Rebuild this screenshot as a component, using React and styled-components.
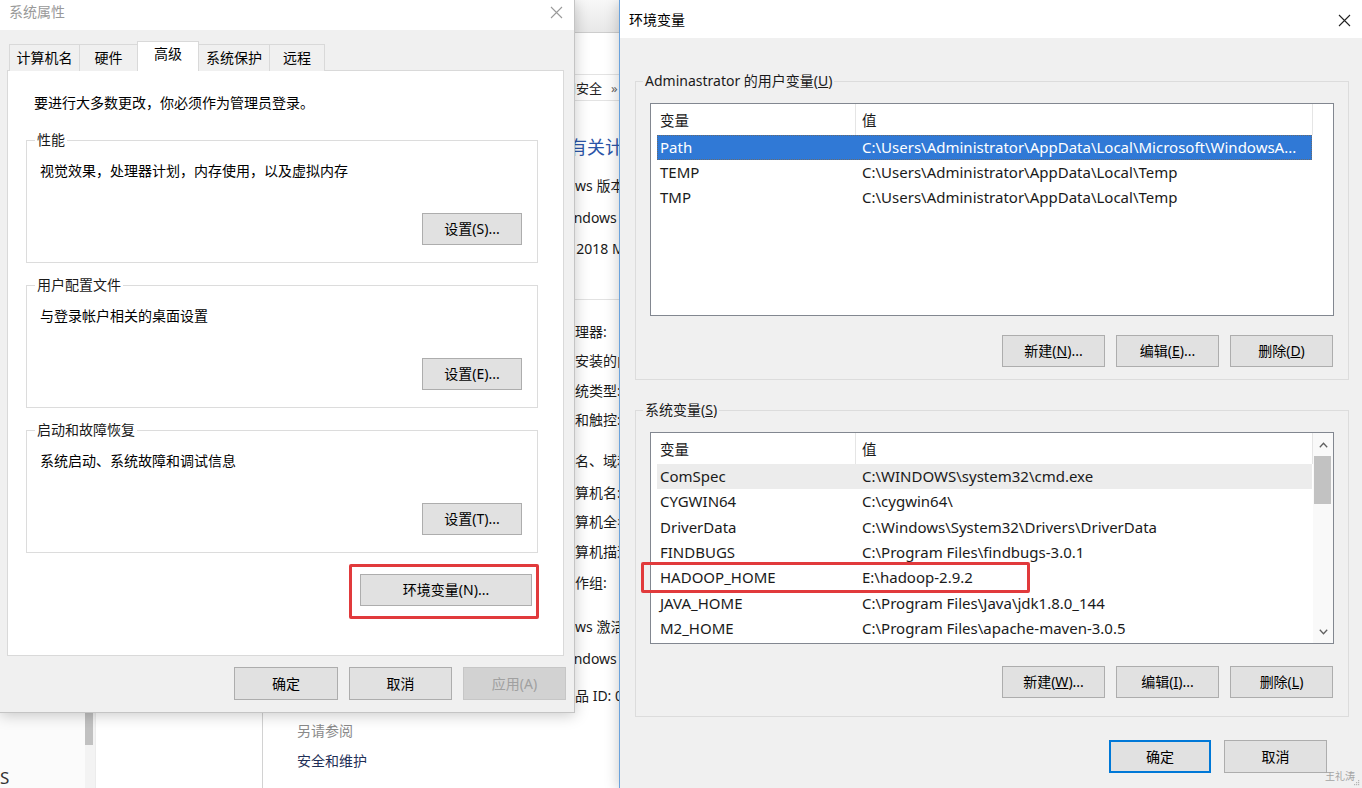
import styled, { createGlobalStyle } from "styled-components";

const GlobalStyle = createGlobalStyle`
  html, body {
    margin: 0;
    padding: 0;
    background: #fff;
  }
  body {
    font-family: "Noto Sans", "Noto Sans CJK SC", sans-serif;
    font-size: 14px;
    color: #000;
  }
  * {
    box-sizing: border-box;
  }
`;

const Desktop = styled.div`
  position: relative;
  width: 1362px;
  height: 788px;
  overflow: hidden;
  background: #fff;
`;

/* ---------- windows in the background ---------- */

const Explorer = styled.div`
  position: absolute;
  left: 0;
  top: 0;
  width: 262px;
  height: 788px;
  display: flex;
  background: #fff;
`;

const ExplorerList = styled.div`
  width: 85px;
  display: flex;
  flex-direction: column;
  justify-content: flex-end;
  padding-bottom: 0;
  background: #fbfbfb;
  font-size: 17px;
  line-height: 20px;
  color: #333;
  overflow: hidden;
`;

const ScrollTrack = styled.div`
  width: 10px;
  padding: 600px 2px 0 0;
  background: #f3f3f3;
`;

const TrackThumb = styled.div`
  height: 145px;
  background: #c1c1c1;
`;

const NavPane = styled.div`
  flex: 1;
  border-left: 1px solid #ececec;
`;

const ControlPanel = styled.div`
  position: absolute;
  left: 262px;
  top: 0;
  width: 720px;
  height: 788px;
  display: flex;
  flex-direction: column;
  background: #fff;
  border-left: 1px solid #d2d2d2;
`;

const CpToolbar = styled.div`
  height: 33px;
  background: linear-gradient(#f8f8f8, #e8e8e8);
  border-bottom: 1px solid #cdcdcd;
`;

const Breadcrumb = styled.div`
  margin-top: 41px;
  height: 27px;
  display: flex;
  align-items: center;
  gap: 9px;
  padding-left: 274px;
  border-top: 1px solid #e3e3e3;
  border-bottom: 1px solid #e3e3e3;
  font-size: 13px;
  color: #222;
  white-space: nowrap;
`;

const Crumb = styled.span`
  color: ${(p) => (p.$sep ? "#666" : "#222")};
`;

const CpBody = styled.div`
  flex: 1;
  display: flex;
`;

const CpSide = styled.div`
  width: 257px;
  display: flex;
  flex-direction: column;
  justify-content: flex-end;
  padding: 0 0 17px 34px;
  line-height: 20px;
`;

const SeeAlso = styled.div`
  margin-bottom: 10px;
  color: #8a8a8a;
`;

const SideLink = styled.div`
  color: #1f2f57;
`;

const CpMain = styled.div`
  flex: 1;
  display: flex;
  flex-direction: column;
  white-space: nowrap;
`;

const indents = { title: 13, head: 13, item: 41, sub: 37 };

const InfoLine = styled.div`
  margin-top: ${(p) => p.$mt}px;
  padding-left: ${(p) => indents[p.$kind]}px;
  font-size: ${(p) => (p.$kind === "title" ? 18 : 14)}px;
  line-height: ${(p) => (p.$kind === "title" ? 26 : 20)}px;
  color: ${(p) => (p.$kind === "title" ? "#2b55a8" : "#1a1a1a")};
`;

const InfoRule = styled.div`
  margin-top: ${(p) => p.$mt}px;
  height: 1px;
  background: #e2e2e2;
`;

const infoLines = [
  { kind: "title", mt: 33, text: "查看有关计算机的基本信息" },
  { kind: "head", mt: 16, text: "Windows 版本" },
  { kind: "sub", mt: 12, text: "Windows 10 企业版" },
  { kind: "item", mt: 11, text: "© 2018 Microsoft Corporation。保留所有权利。" },
  { kind: "rule", mt: 40 },
  { kind: "item", mt: 22, text: "处理器:" },
  { kind: "item", mt: 9, text: "已安装的内存(RAM):" },
  { kind: "item", mt: 10, text: "系统类型:" },
  { kind: "item", mt: 9, text: "笔和触控:" },
  { kind: "head", mt: 21, text: "计算机名、域和工作组设置" },
  { kind: "item", mt: 12, text: "计算机名:" },
  { kind: "item", mt: 9, text: "计算机全名:" },
  { kind: "item", mt: 10, text: "计算机描述:" },
  { kind: "item", mt: 11, text: "工作组:" },
  { kind: "head", mt: 24, text: "Windows 激活" },
  { kind: "sub", mt: 12, text: "Windows 已激活" },
  { kind: "item", mt: 17, text: "产品 ID: 00330-80000-00000-AA081" },
];

/* ---------- dialogs ---------- */

const Dialog = styled.div`
  position: absolute;
  top: 0;
  left: ${(p) => p.$left}px;
  width: ${(p) => p.$width}px;
  height: ${(p) => p.$height}px;
  display: flex;
  flex-direction: column;
  background: #f0f0f0;
  border: 1px solid ${(p) => (p.$active ? "#6aa2dc" : "#c4c4c4")};
  border-top: none;
  ${(p) => (p.$active ? "border-right: none; border-bottom: none;" : "border-left: none;")}
  box-shadow: 0 2px 14px rgba(0, 0, 0, 0.22);
`;

const TitleBar = styled.div`
  height: ${(p) => p.$h}px;
  display: flex;
  align-items: flex-start;
  padding-top: ${(p) => p.$pt}px;
  padding-left: 9px;
  background: #fff;
  line-height: 20px;
  color: ${(p) => (p.$active ? "#000" : "#999")};
  flex-shrink: 0;
`;

const CloseButton = styled.div`
  margin-left: auto;
  width: 36px;
  height: 20px;
  display: flex;
  align-items: center;
  justify-content: center;
`;

const CloseIcon = ({ color }) => (
  <svg width="13" height="13" viewBox="0 0 13 13">
    <path d="M1 1L12 12M12 1L1 12" stroke={color} strokeWidth="1.1" fill="none" />
  </svg>
);

const SysBody = styled.div`
  flex: 1;
  display: flex;
  flex-direction: column;
  padding: 11px 8px 0 7px;
`;

const Tabs = styled.div`
  height: 30px;
  display: flex;
  align-items: flex-end;
  padding-left: 3px;
  margin-bottom: -1px;
  position: relative;
  z-index: 1;
`;

const Tab = styled.div`
  width: ${(p) => p.$w}px;
  height: ${(p) => (p.$active ? 30 : 27)}px;
  margin-left: -1px;
  display: flex;
  justify-content: center;
  align-items: ${(p) => (p.$active ? "flex-start" : "center")};
  padding-top: ${(p) => (p.$active ? 2 : 0)}px;
  line-height: 20px;
  background: ${(p) => (p.$active ? "#fff" : "#f0f0f0")};
  border: 1px solid #d9d9d9;
  border-bottom: none;
  position: relative;
  z-index: ${(p) => (p.$active ? 2 : 1)};
`;

const TabPanel = styled.div`
  height: 586px;
  margin-right: 2px;
  display: flex;
  flex-direction: column;
  padding: 22px 25px 0 18px;
  background: #fff;
  border: 1px solid #d9d9d9;
`;

const Notice = styled.div`
  padding-left: 8px;
  line-height: 20px;
`;

const Group = styled.fieldset`
  margin: ${(p) => p.$mt}px 0 0;
  padding: 0 ${(p) => p.$pr}px ${(p) => p.$pb}px ${(p) => p.$pl}px;
  border: 1px solid #dcdcdc;
  min-width: 0;
  display: flex;
  flex-direction: column;
`;

const Legend = styled.legend`
  margin-left: ${(p) => p.$ml}px;
  padding: 0 2px;
  line-height: 20px;
  color: #1a1a1a;
`;

const GroupText = styled.div`
  margin-top: 11px;
  line-height: 20px;
`;

const ButtonRow = styled.div`
  margin-top: ${(p) => p.$mt}px;
  padding-right: ${(p) => p.$pr || 0}px;
  display: flex;
  justify-content: flex-end;
  gap: ${(p) => p.$gap || 11}px;
`;

const Button = styled.button`
  width: ${(p) => p.$w || 103}px;
  height: ${(p) => p.$h || 32}px;
  padding: 0;
  font-family: inherit;
  font-size: 14px;
  line-height: 20px;
  color: ${(p) => (p.disabled ? "#a0a0a0" : "#000")};
  background: ${(p) => (p.disabled ? "#d2d2d2" : "#e1e1e1")};
  border: 1px solid
    ${(p) => (p.disabled ? "#c6c6c6" : p.$primary ? "#0078d7" : "#adadad")};
  box-shadow: ${(p) => (p.$primary ? "inset 0 0 0 1px #0078d7" : "none")};
  border-radius: 0;
`;

const DialogFooter = styled.div`
  margin-top: ${(p) => p.$mt}px;
  padding-right: ${(p) => p.$pr}px;
  display: flex;
  justify-content: flex-end;
  gap: ${(p) => p.$gap}px;
`;

/* ---------- environment variables dialog ---------- */

const EnvBody = styled.div`
  flex: 1;
  display: flex;
  flex-direction: column;
  padding: 33px 13px 0 15px;
`;

const ListBox = styled.div`
  margin-top: 12px;
  height: ${(p) => p.$h}px;
  display: flex;
  background: #fff;
  border: 1px solid #828790;
  overflow: hidden;
`;

const ListMain = styled.div`
  width: 662px;
  display: flex;
  flex-direction: column;
`;

const HeaderRow = styled.div`
  height: 31px;
  flex-shrink: 0;
  display: flex;
  border-right: 1px solid #e5e5e5;
  line-height: 20px;
`;

const HeaderCell = styled.div`
  display: flex;
  align-items: center;
  width: ${(p) => (p.$first ? "205px" : "auto")};
  padding-left: ${(p) => (p.$first ? 9 : 6)}px;
  border-right: ${(p) => (p.$first ? "1px solid #e5e5e5" : "none")};
  font-size: 14.5px;
  color: #1a1a1a;
`;

const Row = styled.div`
  margin-left: 6px;
  width: 655px;
  height: ${(p) => p.$h}px;
  flex-shrink: 0;
  display: grid;
  grid-template-columns: 202px 1fr;
  align-items: center;
  padding-left: 3px;
  padding-bottom: 1px;
  white-space: nowrap;
  overflow: hidden;
  font-size: 15px;
  color: ${(p) => (p.$selected ? "#fff" : "#1a1a1a")};
  background: ${(p) =>
    p.$selected ? "#3079d6" : p.$hover ? "#ececec" : "transparent"};
  outline: ${(p) => (p.$selected ? "1px dotted #6b6b6b" : "none")};
  outline-offset: -1px;
`;

const ScrollBar = styled.div`
  flex: 1;
  display: flex;
  flex-direction: column;
  background: #f9f9f9;
`;

const ScrollArrow = styled.div`
  height: 23px;
  flex-shrink: 0;
  display: flex;
  align-items: center;
  justify-content: center;
`;

const ScrollThumb = styled.div`
  height: 48px;
  margin: 0 2px 0 1px;
  background: #c2c2c2;
`;

const ScrollSpace = styled.div`
  flex: 1;
`;

const Chevron = ({ up }) => (
  <svg width="9" height="6" viewBox="0 0 9 6">
    <path
      d={up ? "M0.8 5.2L4.5 1.3L8.2 5.2" : "M0.8 0.8L4.5 4.7L8.2 0.8"}
      stroke="#606060"
      strokeWidth="1.3"
      fill="none"
    />
  </svg>
);

/* ---------- overlays ---------- */

const Highlight = styled.div`
  position: absolute;
  left: ${(p) => p.$x}px;
  top: ${(p) => p.$y}px;
  width: ${(p) => p.$w}px;
  height: ${(p) => p.$h}px;
  border: 3px solid #e13a3c;
  border-radius: 2px;
  z-index: 10;
`;

const Watermark = styled.div`
  position: absolute;
  right: 7px;
  bottom: 6px;
  font-size: 10px;
  line-height: 12px;
  color: #a3a3a3;
  z-index: 10;
`;

const Grip = styled.div`
  position: absolute;
  right: 2px;
  bottom: 2px;
  z-index: 10;
  display: flex;
`;

const userVars = [
  ["Path", "C:\\Users\\Administrator\\AppData\\Local\\Microsoft\\WindowsA..."],
  ["TEMP", "C:\\Users\\Administrator\\AppData\\Local\\Temp"],
  ["TMP", "C:\\Users\\Administrator\\AppData\\Local\\Temp"],
];

const systemVars = [
  ["ComSpec", "C:\\WINDOWS\\system32\\cmd.exe"],
  ["CYGWIN64", "C:\\cygwin64\\"],
  ["DriverData", "C:\\Windows\\System32\\Drivers\\DriverData"],
  ["FINDBUGS", "C:\\Program Files\\findbugs-3.0.1"],
  ["HADOOP_HOME", "E:\\hadoop-2.9.2"],
  ["JAVA_HOME", "C:\\Program Files\\Java\\jdk1.8.0_144"],
  ["M2_HOME", "C:\\Program Files\\apache-maven-3.0.5"],
];

const tabs = [
  ["计算机名", 71],
  ["硬件", 59],
  ["高级", 62],
  ["系统保护", 72],
  ["远程", 56],
];

const perfGroups = [
  ["性能", "视觉效果，处理器计划，内存使用，以及虚拟内存", "设置(S)..."],
  ["用户配置文件", "与登录帐户相关的桌面设置", "设置(E)..."],
  ["启动和故障恢复", "系统启动、系统故障和调试信息", "设置(T)..."],
];

const VarList = ({ rows, height, rowHeight, scroll }) => (
  <ListBox $h={height}>
    <ListMain>
      <HeaderRow>
        <HeaderCell $first>变量</HeaderCell>
        <HeaderCell>值</HeaderCell>
      </HeaderRow>
      {rows.map(([name, value], i) => (
        <Row
          key={name}
          $h={rowHeight}
          $selected={!scroll && i === 0}
          $hover={scroll && i === 0}
        >
          <span>{name}</span>
          <span>{value}</span>
        </Row>
      ))}
    </ListMain>
    {scroll && (
      <ScrollBar>
        <ScrollArrow>
          <Chevron up />
        </ScrollArrow>
        <ScrollThumb />
        <ScrollSpace />
        <ScrollArrow>
          <Chevron />
        </ScrollArrow>
      </ScrollBar>
    )}
  </ListBox>
);

const App = () => {
  return (
    <Desktop>
      <GlobalStyle />

      <Explorer>
        <ExplorerList>S</ExplorerList>
        <ScrollTrack>
          <TrackThumb />
        </ScrollTrack>
        <NavPane />
      </Explorer>

      <ControlPanel>
        <CpToolbar />
        <Breadcrumb>
          <Crumb>系统和安全</Crumb>
          <Crumb $sep>»</Crumb>
          <Crumb>系统</Crumb>
        </Breadcrumb>
        <CpBody>
          <CpSide>
            <SeeAlso>另请参阅</SeeAlso>
            <SideLink>安全和维护</SideLink>
          </CpSide>
          <CpMain>
            {infoLines.map((line, i) =>
              line.kind === "rule" ? (
                <InfoRule key={i} $mt={line.mt} />
              ) : (
                <InfoLine key={i} $kind={line.kind} $mt={line.mt}>
                  {line.text}
                </InfoLine>
              )
            )}
          </CpMain>
        </CpBody>
      </ControlPanel>

      <Dialog $left={0} $width={575} $height={713}>
        <TitleBar $h={30} $pt={2}>
          系统属性
          <CloseButton>
            <CloseIcon color="#9a9a9a" />
          </CloseButton>
        </TitleBar>
        <SysBody>
          <Tabs>
            {tabs.map(([label, w]) => (
              <Tab key={label} $w={w} $active={label === "高级"}>
                {label}
              </Tab>
            ))}
          </Tabs>
          <TabPanel>
            <Notice>要进行大多数更改，你必须作为管理员登录。</Notice>
            {perfGroups.map(([title, text, action], i) => (
              <Group key={title} $mt={i === 0 ? 17 : 12} $pl={13} $pr={15} $pb={17}>
                <Legend $ml={-5}>{title}</Legend>
                <GroupText>{text}</GroupText>
                <ButtonRow $mt={32}>
                  <Button $w={100}>{action}</Button>
                </ButtonRow>
              </Group>
            ))}
            <ButtonRow $mt={21} $pr={6}>
              <Button $w={172}>环境变量(N)...</Button>
            </ButtonRow>
          </TabPanel>
          <DialogFooter $mt={11} $pr={0} $gap={11}>
            <Button $w={104} $h={33}>确定</Button>
            <Button $h={33}>取消</Button>
            <Button $h={33} disabled>
              应用(A)
            </Button>
          </DialogFooter>
        </SysBody>
      </Dialog>

      <Dialog $left={619} $width={743} $height={788} $active>
        <TitleBar $h={38} $pt={10} $active>
          环境变量
          <CloseButton>
            <CloseIcon color="#222" />
          </CloseButton>
        </TitleBar>
        <EnvBody>
          <Group $mt={0} $pl={14} $pr={14} $pb={12}>
            <Legend $ml={-7}>
              Adminastrator 的用户变量(<u>U</u>)
            </Legend>
            <VarList rows={userVars} height={213} rowHeight={25} />
            <ButtonRow $mt={19} $pr={1}>
              <Button>
                新建(<u>N</u>)...
              </Button>
              <Button>
                编辑(<u>E</u>)...
              </Button>
              <Button>
                删除(<u>D</u>)
              </Button>
            </ButtonRow>
          </Group>
          <Group $mt={20} $pl={14} $pr={14} $pb={18}>
            <Legend $ml={-7}>
              系统变量(<u>S</u>)
            </Legend>
            <VarList rows={systemVars} height={212} rowHeight={25.3} scroll />
            <ButtonRow $mt={22} $pr={1}>
              <Button>
                新建(<u>W</u>)...
              </Button>
              <Button>
                编辑(<u>I</u>)...
              </Button>
              <Button>
                删除(<u>L</u>)
              </Button>
            </ButtonRow>
          </Group>
          <DialogFooter $mt={23} $pr={22} $gap={13}>
            <Button $w={102} $h={33} $primary>
              确定
            </Button>
            <Button $h={33}>取消</Button>
          </DialogFooter>
        </EnvBody>
      </Dialog>

      <Highlight $x={349} $y={564} $w={190} $h={55} />
      <Highlight $x={641} $y={562} $w={389} $h={31} />
      <Watermark>王礼涛</Watermark>
      <Grip>
        <svg width="7" height="7" viewBox="0 0 7 7">
          <rect x="5" y="1" width="1.2" height="1.2" fill="#b5b5b5" />
          <rect x="3" y="3" width="1.2" height="1.2" fill="#b5b5b5" />
          <rect x="5" y="3" width="1.2" height="1.2" fill="#b5b5b5" />
          <rect x="1" y="5" width="1.2" height="1.2" fill="#b5b5b5" />
          <rect x="3" y="5" width="1.2" height="1.2" fill="#b5b5b5" />
          <rect x="5" y="5" width="1.2" height="1.2" fill="#b5b5b5" />
        </svg>
      </Grip>
    </Desktop>
  );
};

export default App;
